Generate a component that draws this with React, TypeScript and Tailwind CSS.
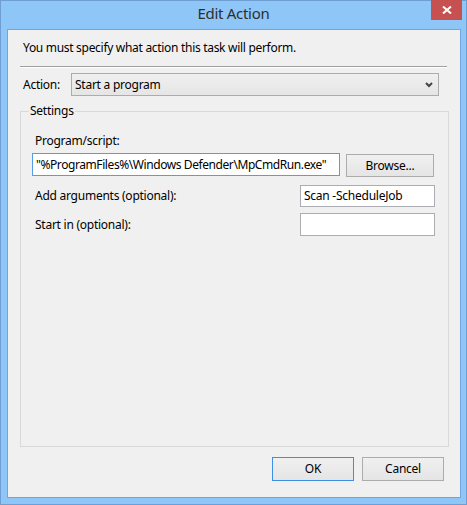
import React from "react";

export default function App() {
  return (
    <div className="w-[467px] h-[505px] bg-[#8ec6f8] border border-[#6f9fd2] flex flex-col font-['Noto_Sans',sans-serif] text-[12px] leading-[16px] tracking-[-0.25px] text-black">
      <div className="h-[28px] relative flex items-center justify-center">
        <span className="text-[15px] leading-[20px] tracking-[-0.3px] text-[#2e2e2e] -mt-[4px]">Edit Action</span>
        <div className="absolute right-[4px] -top-[1px] w-[31px] h-[20px] bg-[#c75050] flex items-center justify-center">
          <svg width="10" height="8" viewBox="0 0 10 8">
            <path d="M1 0.5 L9 7.5 M9 0.5 L1 7.5" stroke="#ffffff" strokeWidth="2" />
          </svg>
        </div>
      </div>
      <div className="ml-[6px] w-[454px] h-[469px] border border-[#72a5d8] bg-[#f0f0f0] flex flex-col">
        <div className="mt-[10px] pl-[15px] whitespace-nowrap tracking-[-0.3px]">You must specify what action this task will perform.</div>
        <div className="mt-[10px] ml-[12px] w-[427px] flex flex-col">
          <div className="h-px bg-[#a0a0a0]" />
          <div className="h-px bg-white" />
        </div>
        <div className="mt-[5px] flex items-center">
          <span className="ml-[15px] w-[48px]">Action:</span>
          <div className="w-[368px] h-[23px] border border-[#acacac] bg-gradient-to-b from-[#f0f0f0] to-[#e5e5e5] flex items-center justify-between pl-[3px] pr-[5px]">
            <span>Start a program</span>
            <svg width="8" height="6" viewBox="0 0 8 6">
              <path d="M1 1 L4 4 L7 1" stroke="#444444" strokeWidth="2" fill="none" />
            </svg>
          </div>
        </div>
        <div className="mt-[15px] ml-[12px] w-[429px] h-[336px] border border-[#d9d9d9] relative flex flex-col">
          <span className="absolute left-[8px] -top-[9px] px-px bg-[#f0f0f0]">Settings</span>
          <div className="mt-[21px] pl-[14px]">Program/script:</div>
          <div className="mt-[4px] flex items-start">
            <div className="ml-[11px] w-[308px] h-[23px] border border-[#569de5] bg-white flex items-center pl-[3px] whitespace-nowrap overflow-hidden tracking-[-0.42px]">
              "%ProgramFiles%\Windows Defender\MpCmdRun.exe"
            </div>
            <div className="ml-[6px] mt-[1px] w-[88px] h-[23px] border border-[#acacac] bg-gradient-to-b from-[#f0f0f0] to-[#e5e5e5] flex items-center justify-center">
              Browse...
            </div>
          </div>
          <div className="mt-[8px] flex items-center justify-between pr-[13px]">
            <span className="pl-[14px]">Add arguments (optional):</span>
            <div className="w-[135px] h-[22px] border border-[#abadb3] bg-white flex items-center pl-[3px] whitespace-nowrap">Scan -ScheduleJob</div>
          </div>
          <div className="mt-[6px] flex items-center justify-between pr-[13px]">
            <span className="pl-[14px]">Start in (optional):</span>
            <div className="w-[135px] h-[23px] border border-[#abadb3] bg-white" />
          </div>
        </div>
        <div className="mt-[10px] mr-[16px] flex justify-end gap-[8px]">
          <div className="w-[82px] h-[24px] border border-[#3c8fe4] bg-gradient-to-b from-[#f0f0f0] to-[#e5e5e5] flex items-center justify-center">OK</div>
          <div className="w-[82px] h-[24px] border border-[#acacac] bg-gradient-to-b from-[#f0f0f0] to-[#e5e5e5] flex items-center justify-center">Cancel</div>
        </div>
      </div>
    </div>
  );
}
